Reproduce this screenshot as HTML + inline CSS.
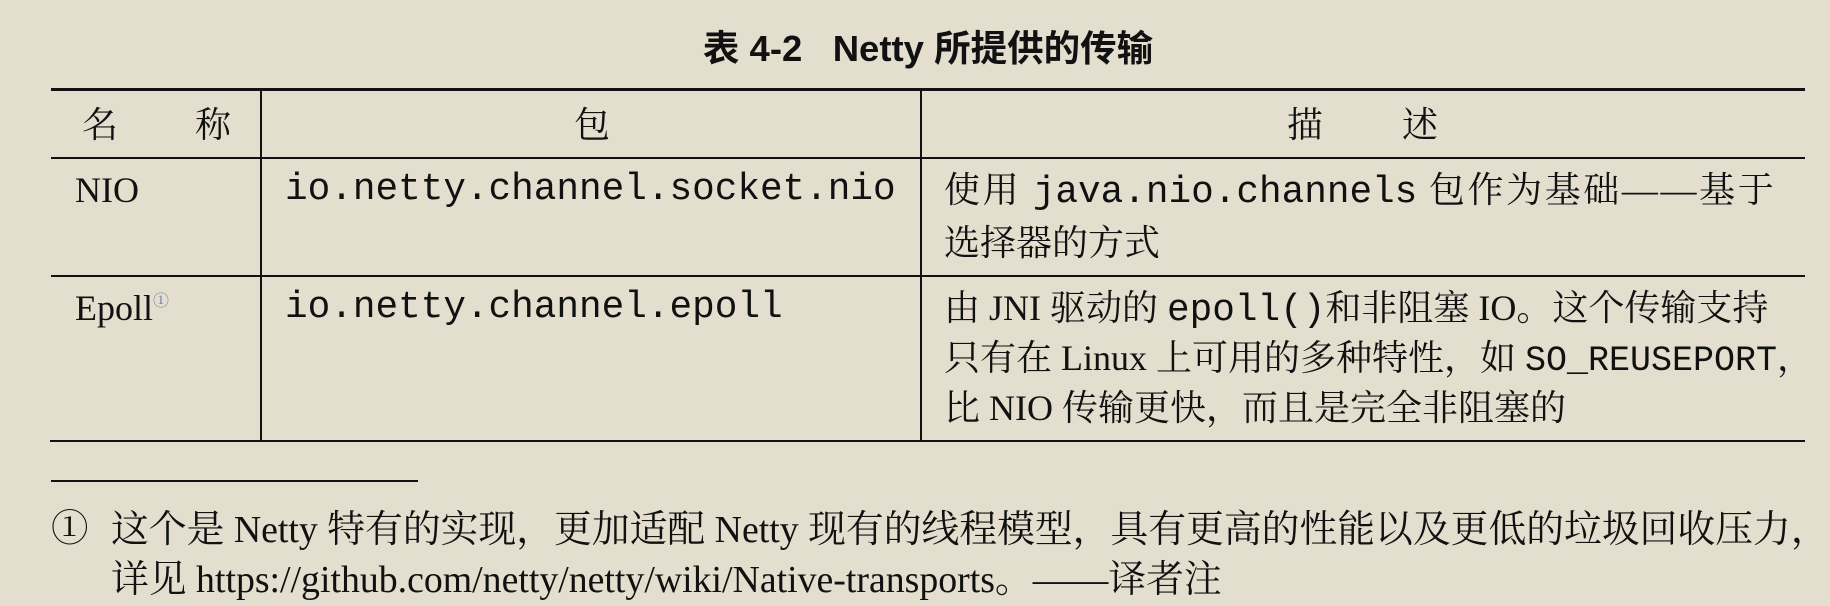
<!DOCTYPE html>
<html><head><meta charset="utf-8"><style>
html,body{margin:0;padding:0;}
body{width:1830px;height:606px;background:#e3dece;position:relative;overflow:hidden;color:#111;font-family:"Liberation Serif","Noto Serif CJK SC",serif;font-size:36px;}
.t{position:absolute;white-space:nowrap;line-height:50px;height:50px;}
.m{font-family:"Liberation Mono","Noto Sans CJK SC",monospace;font-size:37.7px;}
.h{position:absolute;background:#111;}
.ti{font-family:"Liberation Sans","Noto Sans CJK SC",sans-serif;font-weight:bold;font-size:36.5px;}
.sup{font-size:16px;color:#6a7ca8;vertical-align:top;position:relative;top:-6px;}
</style></head><body>
<div class="t ti" style="left:0;width:1856px;text-align:center;top:24px;">表 4-2&nbsp;&nbsp;&nbsp;Netty 所提供的传输</div>

<div class="h" style="left:51px;width:1754px;top:88px;height:3px;"></div>
<div class="h" style="left:51px;width:1754px;top:157px;height:2px;"></div>
<div class="h" style="left:51px;width:1754px;top:275px;height:2px;"></div>
<div class="h" style="left:50px;width:1755px;top:440px;height:2px;"></div>
<div class="h" style="left:260px;width:2px;top:90px;height:351px;"></div>
<div class="h" style="left:920px;width:2px;top:90px;height:351px;"></div>
<div class="h" style="left:51px;width:367px;top:480px;height:2px;"></div>

<div class="t" style="left:82px;top:100px;">名<span style="display:inline-block;width:77px"></span>称</div>
<div class="t" style="left:574px;top:100px;">包</div>
<div class="t" style="left:1287px;top:100px;">描<span style="display:inline-block;width:79px"></span>述</div>

<div class="t" style="left:75px;top:165px;">NIO</div>
<div class="t m" style="left:285px;top:165px;">io.netty.channel.socket.nio</div>
<div class="t" style="left:944px;top:165px;letter-spacing:2.6px;">使用 <span class="m" style="letter-spacing:0">java.nio.channels</span> 包作为基础——基于</div>
<div class="t" style="left:944px;top:218px;">选择器的方式</div>

<div class="t" style="left:75px;top:283px;">Epoll<span class="sup">①</span></div>
<div class="t m" style="left:285px;top:283px;">io.netty.channel.epoll</div>
<div class="t" style="left:944px;top:283px;">由 JNI 驱动的 <span class="m">epoll()</span>和非阻塞 IO。这个传输支持</div>
<div class="t" style="left:944px;top:333px;">只有在 Linux 上可用的多种特性，如 <span class="m" style="font-size:35px">SO_REUSEPORT</span>，</div>
<div class="t" style="left:944px;top:383px;">比 NIO 传输更快，而且是完全非阻塞的</div>

<div class="t" style="left:51px;top:505px;font-size:37.5px;">①</div>
<div class="t" style="left:111px;top:505px;font-size:37.8px;">这个是 Netty 特有的实现，更加适配 Netty 现有的线程模型，具有更高的性能以及更低的垃圾回收压力，</div>
<div class="t" style="left:111px;top:555px;font-size:37.8px;">详见 https://github.com/netty/netty/wiki/Native-transports。——译者注</div>
</body></html>
